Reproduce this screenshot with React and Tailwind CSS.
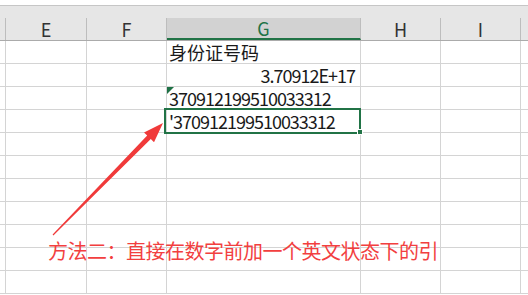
const cols = [
  { key: 'stub', w: 'w-[6px]' },
  { key: 'E', w: 'w-[81px]' },
  { key: 'F', w: 'w-[80px]' },
  { key: 'G', w: 'w-[194px]' },
  { key: 'H', w: 'w-[80px]' },
  { key: 'I', w: 'w-[80px]' },
  { key: 'rest', w: 'flex-1' },
];

const gCells = [
  { text: '身份证号码', align: 'left', digits: false },
  { text: '3.70912E+17', align: 'right', digits: true },
  { text: '370912199510033312', align: 'left', digits: true },
  { text: "'370912199510033312", align: 'left', digits: true },
];

const font = { fontFamily: '"Noto Sans CJK SC", "Noto Sans", sans-serif' };

function HeaderRow() {
  return (
    <div className="flex h-[23px] border-b border-[#ababab]">
      {cols.map((c) => {
        if (c.key === 'G') {
          return (
            <div
              key={c.key}
              className={`${c.w} shrink-0 bg-[#d2d2d2] border-r border-[#bdbdbd] border-b-2 border-b-[#217346] flex items-center justify-center text-[18px] text-[#217346]`}
            >
              G
            </div>
          );
        }
        return (
          <div
            key={c.key}
            className={`${c.w} shrink-0 ${c.key === 'rest' ? '' : 'border-r border-[#bdbdbd]'} flex items-center justify-center text-[18px] text-[#333]`}
          >
            {c.key.length === 1 ? c.key : ''}
          </div>
        );
      })}
    </div>
  );
}

function BodyRow({ idx }) {
  const g = gCells[idx];
  return (
    <div className="flex h-[23px] border-b border-[#d4d4d4]">
      {cols.map((c) => (
        <div
          key={c.key}
          className={`${c.w} shrink-0 ${c.key === 'rest' ? '' : 'border-r border-[#d4d4d4]'} text-[18px] leading-[22px] text-[#1a1a1a] whitespace-nowrap`}
        >
          {c.key === 'G' && g ? (
            <div
              className={`${g.align === 'right' ? 'text-right pr-[5px]' : 'pl-[2px]'} ${g.digits ? 'tracking-[-1px]' : ''}`}
            >
              {g.text}
            </div>
          ) : null}
        </div>
      ))}
    </div>
  );
}

export default function App() {
  return (
    <div className="relative w-[528px] h-[295px] overflow-hidden bg-white" style={font}>
      <div className="h-[6px] bg-white border-b border-[#c6c6c6]" />
      <div className="bg-[#e6e6e6]">
        <div className="h-[12px]" />
        <HeaderRow />
      </div>
      {Array.from({ length: 11 }).map((_, i) => (
        <BodyRow key={i} idx={i} />
      ))}

      {/* error triangle */}
      <svg className="absolute left-[167px] top-[87px]" width="7" height="7" viewBox="0 0 7 7">
        <polygon points="0,0 7,0 0,7" fill="#1e7145" />
      </svg>

      {/* selected cell */}
      <div className="absolute left-[164px] top-[108px] w-[197px] h-[26px] border-2 border-[#217346]" />
      <div className="absolute left-[357px] top-[129px] w-[6px] h-[6px] bg-[#217346] border border-white" />

      {/* arrow */}
      <svg className="absolute left-0 top-0" width="528" height="295" viewBox="0 0 528 295">
        <polygon
          points="163,123 154,142.2 150.8,139 53.4,235.4 52.6,234.6 147.2,135.5 144,132.4"
          fill="#f03a3a"
        />
      </svg>

      <div className="absolute left-[48px] top-[241px] text-[20px] leading-[20px] tracking-[-0.5px] text-[#f23f3f] whitespace-nowrap">
        方法二：直接在数字前加一个英文状态下的引
      </div>
    </div>
  );
}
